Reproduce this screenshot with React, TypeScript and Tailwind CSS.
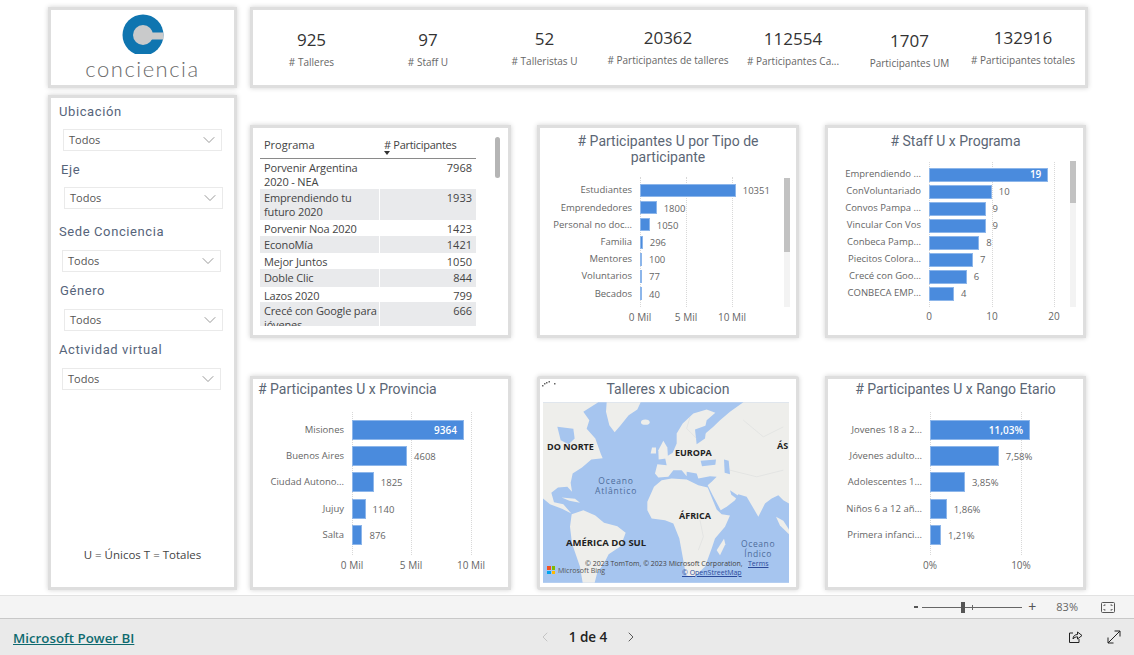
import { ChevronDown, ChevronLeft, ChevronRight } from 'lucide-react';

const ui = "font-['Open_Sans',sans-serif]";
const din = "font-['Roboto',sans-serif]";

type Row = { label: string; value: number; text: string; inside?: boolean };

const kpis = [
  { value: '925', label: '# Talleres', cls: 'w-[117px] pt-[19px]' },
  { value: '97', label: '# Staff U', cls: 'w-[116px] pt-[19px]' },
  { value: '52', label: '# Talleristas U', cls: 'w-[117px] pt-[18px]' },
  { value: '20362', label: '# Participantes de talleres', cls: 'w-[130px] pt-[17px]' },
  { value: '112554', label: '# Participantes Ca...', cls: 'w-[120px] pt-[18px]' },
  { value: '1707', label: 'Participantes UM', cls: 'w-[113px] pt-[20px]' },
  { value: '132916', label: '# Participantes totales', cls: 'w-[114px] pt-[17px]' },
];

const tableRows = [
  { name: 'Porvenir Argentina 2020 - NEA', value: 7968, cls: 'h-[30px] bg-white' },
  { name: 'Emprendiendo tu futuro 2020', value: 1933, cls: 'h-[31px] bg-[#e9eaec]' },
  { name: 'Porvenir Noa 2020', value: 1423, cls: 'h-[16px] bg-white' },
  { name: 'EconoMía', value: 1421, cls: 'h-[17px] bg-[#e9eaec]' },
  { name: 'Mejor Juntos', value: 1050, cls: 'h-[16px] bg-white' },
  { name: 'Doble Clic', value: 844, cls: 'h-[18px] bg-[#e9eaec]' },
  { name: 'Lazos 2020', value: 799, cls: 'h-[15px] bg-white' },
  { name: 'Crecé con Google para jóvenes', value: 666, cls: 'h-[30px] bg-[#e9eaec]' },
];

const tipoRows: Row[] = [
  { label: 'Estudiantes', value: 10351, text: '10351' },
  { label: 'Emprendedores', value: 1800, text: '1800' },
  { label: 'Personal no doc...', value: 1050, text: '1050' },
  { label: 'Familia', value: 296, text: '296' },
  { label: 'Mentores', value: 100, text: '100' },
  { label: 'Voluntarios', value: 77, text: '77' },
  { label: 'Becados', value: 40, text: '40' },
];

const staffRows: Row[] = [
  { label: 'Emprendiendo ...', value: 19, text: '19', inside: true },
  { label: 'ConVoluntariado', value: 10, text: '10' },
  { label: 'Convos Pampa ...', value: 9, text: '9' },
  { label: 'Vincular Con Vos', value: 9, text: '9' },
  { label: 'Conbeca Pamp...', value: 8, text: '8' },
  { label: 'Piecitos Colora...', value: 7, text: '7' },
  { label: 'Crecé con Goo...', value: 6, text: '6' },
  { label: 'CONBECA EMP...', value: 4, text: '4' },
];

const provRows: Row[] = [
  { label: 'Misiones', value: 9364, text: '9364', inside: true },
  { label: 'Buenos Aires', value: 4608, text: '4608' },
  { label: 'Ciudad Autono...', value: 1825, text: '1825' },
  { label: 'Jujuy', value: 1140, text: '1140' },
  { label: 'Salta', value: 876, text: '876' },
];

const edadRows: Row[] = [
  { label: 'Jovenes 18 a 2...', value: 11.03, text: '11,03%', inside: true },
  { label: 'Jóvenes adulto...', value: 7.58, text: '7,58%' },
  { label: 'Adolescentes 1...', value: 3.85, text: '3,85%' },
  { label: 'Niños 6 a 12 añ...', value: 1.86, text: '1,86%' },
  { label: 'Primera infanci...', value: 1.21, text: '1,21%' },
];

function Card({ className, children }: { className: string; children: React.ReactNode }) {
  return (
    <div className={`border-[3px] border-[#dedede] bg-white shadow-[0_0_5px_rgba(0,0,0,0.18)] ${className}`}>
      {children}
    </div>
  );
}

function Slicer({ label, labelCls, boxCls }: { label: string; labelCls: string; boxCls: string }) {
  return (
    <div>
      <p className={`${din} text-[13px] leading-[16px] tracking-[0.6px] text-[#56647a] ${labelCls}`}>{label}</p>
      <div className={`w-[159px] h-[22px] border border-[#eaeaea] flex items-center justify-between pl-[5px] pr-[2px] ${boxCls}`}>
        <span className={`${ui} text-[11px] text-[#555]`}>Todos</span>
        <ChevronDown size={20} strokeWidth={0.9} className="text-[#777]" />
      </div>
    </div>
  );
}

function Chart({
  title,
  titleCls,
  rows,
  scale,
  labelW,
  rowCls,
  barCls,
  plotCls,
  listCls,
  ticks,
  plotH,
  axisCls,
}: {
  title: React.ReactNode;
  titleCls: string;
  rows: Row[];
  scale: number;
  labelW: number;
  rowCls: string;
  barCls: string;
  plotCls: string;
  listCls: string;
  ticks: { at: number; text: string }[];
  plotH: number;
  axisCls: string;
}) {
  return (
    <>
      <h3 className={`${din} text-[14px] leading-[16px] text-[#5b6675] ${titleCls}`}>{title}</h3>
      <div className={`relative ${plotCls}`}>
        {ticks.map((t) => (
          <div
            key={t.text}
            className="absolute top-0 border-l border-dotted border-[#d8d8d8]"
            style={{ left: labelW + t.at, height: plotH }}
          />
        ))}
        <div className={`relative flex flex-col ${listCls}`}>
          {rows.map((r) => (
            <div key={r.label} className={`flex items-center ${rowCls}`}>
              <span
                className={`${ui} text-[9.5px] text-[#666] text-right pr-[8px] whitespace-nowrap shrink-0`}
                style={{ width: labelW }}
              >
                {r.label}
              </span>
              <div
                className={`bg-[#4a8bdd] border border-[#8db6ea] flex items-center justify-end shrink-0 ${barCls}`}
                style={{ width: Math.max(r.value * scale, 1) }}
              >
                {r.inside && <span className={`${ui} text-[10px] font-semibold text-white pr-[6px]`}>{r.text}</span>}
              </div>
              {!r.inside && <span className={`${ui} text-[9.5px] text-[#666] pl-[7px] pt-[2px]`}>{r.text}</span>}
            </div>
          ))}
        </div>
        <div className={`relative ${axisCls}`}>
          {ticks.map((t) => (
            <span
              key={t.text}
              className={`${ui} absolute top-0 -translate-x-1/2 text-[10px] text-[#666] whitespace-nowrap`}
              style={{ left: labelW + t.at }}
            >
              {t.text}
            </span>
          ))}
        </div>
      </div>
    </>
  );
}

function Scroll({ cls, thumbCls }: { cls: string; thumbCls: string }) {
  return (
    <div className={`absolute w-[6px] bg-[#f3f3f3] ${cls}`}>
      <div className={`w-full bg-[#c2c2c2] ${thumbCls}`} />
    </div>
  );
}

function WorldMap() {
  return (
    <svg viewBox="39 96 738 542" className="w-full h-full block">
      <rect x="39" y="96" width="738" height="542" fill="#a6c5ef" />
      <g fill="#eeeeeb">
        <path d="M230 96 L332 96 L322 118 L296 135 L272 165 L254 186 L238 165 L228 125 Z" />
        <ellipse cx="346" cy="156" rx="13" ry="8" />
        <path d="M39 96 L205 96 L180 112 L160 125 L178 150 L170 176 L196 205 L212 250 L218 264 L184 268 L156 292 L128 310 L122 338 L126 365 L112 350 L84 352 L64 368 L72 396 L100 402 L124 430 L96 416 L60 402 L39 385 Z" />
        <path d="M95 382 L135 386 L150 398 L118 392 Z" />
        <path d="M125 432 L160 420 L196 436 L222 458 L262 468 L287 488 L272 528 L236 552 L222 580 L202 606 L194 638 L158 638 L150 590 L126 520 L120 470 Z" />
        <path d="M385 240 L400 212 L412 232 L414 264 L386 268 Z" />
        <path d="M366 232 L378 232 L378 250 L362 250 Z" />
        <path d="M640 96 L777 96 L777 400 L760 390 L745 375 L725 385 L705 400 L685 440 L665 405 L650 380 L625 372 L615 390 L590 410 L572 420 L548 375 L533 345 L545 335 L560 320 L540 318 L505 325 L500 310 L470 305 L470 318 L455 300 L430 300 L415 320 L385 322 L375 310 L382 282 L410 285 L405 262 L428 248 L440 220 L440 190 L458 160 L490 130 L530 118 L556 128 L530 150 L520 195 L550 170 L570 150 L600 125 Z" />
        <path d="M352 395 L372 350 L395 330 L425 325 L470 328 L505 345 L533 352 L560 418 L575 432 L600 436 L585 470 L555 505 L545 535 L525 590 L490 622 L468 615 L458 560 L448 505 L430 460 L405 450 L365 445 L352 420 Z" />
        <path d="M560 540 L582 506 L586 522 L570 555 Z" />
        <path d="M738 440 L760 452 L777 478 L777 492 L750 466 Z" />
      </g>
      <g fill="#a6c5ef">
        <path d="M82 170 L130 176 L134 205 L116 222 L92 210 Z" />
        <path d="M495 178 L530 165 L525 205 L500 222 Z" />
        <path d="M512 272 L558 268 L556 284 L516 288 Z" />
        <path d="M582 268 L596 272 L600 312 L584 308 Z" />
        <path d="M600 360 L636 384 L628 392 L604 374 Z" />
      </g>
      <g stroke="#d8dbdb" strokeWidth="1.5" fill="none">
        <path d="M480 140 L470 175 L500 205" />
        <path d="M640 150 L700 200 L760 170" />
        <path d="M600 300 L680 320 L760 300" />
        <path d="M510 450 L520 500 L505 540" />
      </g>
    </svg>
  );
}

function MapLabel({ cls, children }: { cls: string; children: React.ReactNode }) {
  return <span className={`absolute whitespace-nowrap ${cls}`}>{children}</span>;
}

export default function App() {
  return (
    <div className="w-[1134px] h-[655px] overflow-hidden bg-white flex flex-col">
      <div className="h-[595px] flex pt-[7px] pl-[48px] gap-[13px]">
        <div className="w-[189px] flex flex-col gap-[7px]">
          <Card className="h-[81px] flex flex-col items-center">
            <svg width="44" height="42" viewBox="0 0 44 42" className="mt-[2px] shrink-0">
              <circle cx="22" cy="23" r="20.5" fill="#0f75b0" />
              <circle cx="22" cy="23" r="10" fill="#c9cacb" />
              <rect x="24" y="20.5" width="18.5" height="7" fill="#c9cacb" />
            </svg>
            <span className="font-['Lato',sans-serif] font-light text-[22px] leading-[22px] tracking-[1.5px] text-[#6b6b6b] mt-[4px]">
              conciencia
            </span>
          </Card>
          <Card className="h-[495px] flex flex-col justify-between pt-[5px] pb-[24px]">
            <div className="flex flex-col">
              <Slicer label="Ubicación" labelCls="ml-[8px] mb-[9px] mt-[1px]" boxCls="ml-[12px] mb-[11px]" />
              <Slicer label="Eje" labelCls="ml-[10px] mb-[9px]" boxCls="ml-[13px] mb-[15px]" />
              <Slicer label="Sede Conciencia" labelCls="ml-[8px] mb-[10px]" boxCls="ml-[11px] mb-[11px]" />
              <Slicer label="Género" labelCls="ml-[9px] mb-[10px]" boxCls="ml-[13px] mb-[11px]" />
              <Slicer label="Actividad virtual" labelCls="ml-[8px] mb-[10px]" boxCls="ml-[11px]" />
            </div>
            <p className={`${ui} text-[11.5px] text-center text-[#444]`}>U = Únicos T = Totales</p>
          </Card>
        </div>

        <div className="w-[838px] flex flex-col">
          <Card className="h-[81px] flex">
            {kpis.map((k) => (
              <div key={k.label} className={`flex flex-col items-center ${k.cls}`}>
                <span className={`${ui} text-[17px] leading-[22px] text-[#333]`}>{k.value}</span>
                <span className={`${ui} text-[10px] leading-[14px] mt-[4px] text-[#666] whitespace-nowrap`}>{k.label}</span>
              </div>
            ))}
          </Card>

          <div className="mt-[37px] flex gap-[26px]">
            <Card className="relative w-[261px] h-[213px] pl-[7px] pt-[9px]">
              <div className="w-[216px] h-[189px] overflow-hidden">
                <div className={`${ui} flex h-[22px] border-b border-[#8a8a8a] text-[11px] text-[#444]`}>
                  <span className="w-[120px] pl-[4px]">Programa</span>
                  <span className="relative pl-[4px] tracking-[-0.3px]">
                    # Participantes
                    <span className="absolute left-[4px] top-[14px] w-0 h-0 border-x-[3px] border-x-transparent border-t-[4px] border-t-[#333]" />
                  </span>
                </div>
                {tableRows.map((r) => (
                  <div key={r.name} className={`${ui} flex text-[11px] leading-[14px] text-[#444] ${r.cls}`}>
                    <span className="w-[120px] pl-[4px] pt-[2px] border-r border-white tracking-[-0.15px]">{r.name}</span>
                    <span className="flex-1 text-right pr-[4px] pt-[2px]">{r.value}</span>
                  </div>
                ))}
              </div>
              <div className="absolute left-[242px] top-[9px] w-[5px] h-[41px] rounded-full bg-[#b5b5b5]" />
            </Card>

            <Card className="relative w-[262px] h-[213px]">
              <Chart
                title={<>{'# Participantes U por Tipo de'}<br />participante</>}
                titleCls="text-center pt-[5px]"
                rows={tipoRows}
                scale={0.00925}
                labelW={100}
                rowCls="h-[17.2px]"
                barCls="h-[13px]"
                plotCls="mt-[12px]"
                listCls="pt-[5px]"
                ticks={[{ at: 0, text: '0 Mil' }, { at: 46, text: '5 Mil' }, { at: 92, text: '10 Mil' }]}
                plotH={130}
                axisCls="h-[14px] mt-[8px]"
              />
              <Scroll cls="left-[244px] top-[50px] h-[129px]" thumbCls="h-[74px]" />
            </Card>

            <Card className="relative w-[261px] h-[213px]">
              <Chart
                title="# Staff U x Programa"
                titleCls="text-center pt-[5px]"
                rows={staffRows}
                scale={6.28}
                labelW={101}
                rowCls="h-[17px]"
                barCls="h-[14px]"
                plotCls="mt-[13px]"
                listCls="pt-[4px]"
                ticks={[{ at: 0, text: '0' }, { at: 63, text: '10' }, { at: 125, text: '20' }]}
                plotH={145}
                axisCls="h-[14px] mt-[7px]"
              />
              <Scroll cls="left-[242px] top-[33px] h-[146px]" thumbCls="h-[42px]" />
            </Card>
          </div>

          <div className="mt-[38px] flex gap-[26px]">
            <Card className="w-[261px] h-[214px]">
              <Chart
                title="# Participantes U x Provincia"
                titleCls="pl-[5px] pt-[2px]"
                rows={provRows}
                scale={0.01195}
                labelW={99}
                rowCls="h-[26.2px]"
                barCls="h-[20px]"
                plotCls="mt-[15px]"
                listCls="pt-[5px]"
                ticks={[{ at: 0, text: '0 Mil' }, { at: 59, text: '5 Mil' }, { at: 119, text: '10 Mil' }]}
                plotH={143}
                axisCls="h-[14px] mt-[10px]"
              />
            </Card>

            <Card className="relative w-[262px] h-[214px] rounded-[3px]">
              <h3 className={`${din} text-[14px] leading-[16px] text-[#5b6675] text-center pt-[2px]`}>
                Talleres x ubicacion
              </h3>
              <div className="relative w-[246px] h-[181px] ml-[3px] mt-[5px] overflow-hidden font-['Open_Sans',sans-serif]">
                <WorldMap />
                <MapLabel cls="left-[4px] top-[38px] text-[9px] font-bold text-[#222]">DO NORTE</MapLabel>
                <MapLabel cls="left-[132px] top-[44px] text-[9px] font-bold text-[#222]">EUROPA</MapLabel>
                <MapLabel cls="left-[234px] top-[37px] text-[9px] font-bold text-[#222]">ÁS</MapLabel>
                <MapLabel cls="left-[136px] top-[107px] text-[9px] font-bold text-[#222]">ÁFRICA</MapLabel>
                <MapLabel cls="left-[23px] top-[134px] text-[9.5px] font-bold text-[#222]">AMÉRICA DO SUL</MapLabel>
                <MapLabel cls="left-[52px] top-[74px] text-[8.5px] leading-[10px] tracking-[0.8px] text-center text-[#4e6d9c]">Oceano<br />Atlântico</MapLabel>
                <MapLabel cls="left-[198px] top-[137px] text-[8.5px] leading-[10px] tracking-[0.6px] text-center text-[#4e6d9c]">Oceano<br />Índico</MapLabel>
                <MapLabel cls="left-[42px] top-[158px] text-[7px] leading-[7px] text-[#444]">© 2023 TomTom, © 2023 Microsoft Corporation,</MapLabel>
                <MapLabel cls="left-[205px] top-[158px] text-[7px] leading-[7px] underline text-[#2b4a9b]">Terms</MapLabel>
                <MapLabel cls="left-[139px] top-[167px] text-[7px] leading-[7px] underline text-[#2b4a9b]">© OpenStreetMap</MapLabel>
                <MapLabel cls="left-[15px] top-[165px] text-[7px] leading-[7px] text-[#555]">Microsoft Bing</MapLabel>
                <div className="absolute left-[4px] top-[164px] grid grid-cols-2 gap-px w-[8px]">
                  <span className="h-[3.5px] bg-[#f25022]" />
                  <span className="h-[3.5px] bg-[#7fba00]" />
                  <span className="h-[3.5px] bg-[#00a4ef]" />
                  <span className="h-[3.5px] bg-[#ffb900]" />
                </div>
              </div>
              <svg width="16" height="8" viewBox="0 0 16 8" className="absolute left-[1px] top-[1px]">
                <g fill="#666">
                  <rect x="1" y="5" width="1.5" height="1.5" />
                  <rect x="3" y="3" width="1.5" height="1.5" />
                  <rect x="5" y="2" width="1.5" height="1.5" />
                  <rect x="7.5" y="1" width="1.5" height="1.5" />
                  <rect x="13" y="3" width="1.5" height="1.5" />
                </g>
              </svg>
            </Card>

            <Card className="w-[261px] h-[214px]">
              <Chart
                title="# Participantes U x Rango Etario"
                titleCls="text-center pt-[2px]"
                rows={edadRows}
                scale={9.07}
                labelW={102}
                rowCls="h-[26.2px]"
                barCls="h-[20px]"
                plotCls="mt-[15px]"
                listCls="pt-[5px]"
                ticks={[{ at: 0, text: '0%' }, { at: 91, text: '10%' }]}
                plotH={143}
                axisCls="h-[14px] mt-[10px]"
              />
            </Card>
          </div>
        </div>
      </div>

      <div className="h-[24px] bg-[#f4f4f4] border-t border-b border-t-[#e2e2e2] border-b-[#c8c8c8] flex items-center justify-end pr-[19px]">
        <span className="w-[4px] h-[2px] bg-[#555] mr-[4px]" />
        <div className="relative w-[100px] h-px bg-[#666] mr-[6px]">
          <div className="absolute left-[39px] -top-[5px] w-[4px] h-[11px] bg-[#555]" />
          <div className="absolute left-[50px] -top-[2px] w-px h-[5px] bg-[#666]" />
        </div>
        <span className="text-[#555] text-[14px] leading-none mr-[20px]">+</span>
        <span className={`${ui} text-[11px] text-[#666] mr-[23px]`}>83%</span>
        <svg width="14" height="11" viewBox="0 0 14 11" fill="none" stroke="#555">
          <rect x="0.5" y="0.5" width="13" height="10" rx="1" />
          <path d="M3 4 V3 H4.5 M9.5 3 H11 V4 M3 7 V8 H4.5 M9.5 8 H11 V7" />
        </svg>
      </div>

      <div className="flex-1 bg-[#eaeaea] relative flex items-center justify-center">
        <a className={`${ui} absolute left-[13px] top-[10px] text-[13.3px] font-semibold underline text-[#0f6a6f]`}>Microsoft Power BI</a>
        <div className="flex items-center ml-[42px]">
          <ChevronLeft size={16} strokeWidth={1.2} className="text-[#bbb]" />
          <span className={`${ui} text-[13.5px] font-semibold text-[#222] mx-[16px]`}>1 de 4</span>
          <ChevronRight size={16} strokeWidth={1.2} className="text-[#333]" />
        </div>
        <svg width="15" height="14" viewBox="0 0 15 14" fill="none" stroke="#222" className="absolute left-[1068px]">
          <path d="M5 3 H1.5 V12.5 H11 V9" />
          <path d="M5 9 C5 6 7 4.5 9.5 4.5 V2 L14 5.5 L9.5 9 V6.8 C8 6.8 6 7.5 5 9 Z" />
        </svg>
        <svg width="14" height="14" viewBox="0 0 14 14" fill="none" stroke="#222" className="absolute left-[1107px]">
          <path d="M1 13 L13 1 M7.5 1 H13 V6.5 M1 7.5 V13 H6.5" />
        </svg>
      </div>
    </div>
  );
}
